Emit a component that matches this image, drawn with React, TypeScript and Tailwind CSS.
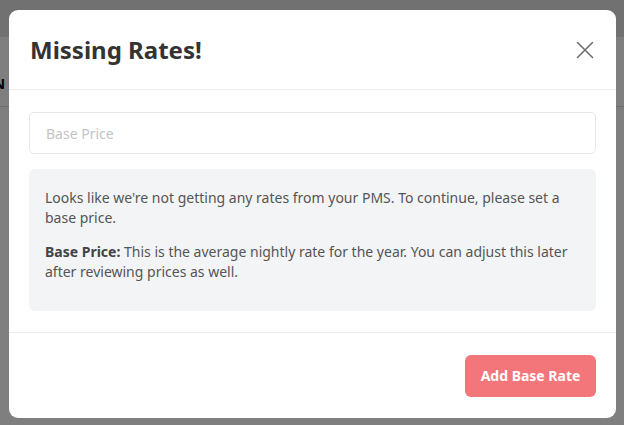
import React from "react";

export default function App() {
  return (
    <div
      className="relative w-[624px] h-[425px] overflow-hidden bg-white"
      style={{ fontFamily: '"Noto Sans", "Open Sans", sans-serif' }}
    >
      {/* background page */}
      <div className="flex flex-col">
        <div className="h-[37px] bg-[#e2e2e2]" />
        <div className="h-[70px] border-b border-[#d8d8d8] flex items-start pt-[38px]">
          <span className="-ml-[7px] text-[15px] leading-[16px] font-bold text-black">N</span>
        </div>
      </div>

      {/* overlay */}
      <div className="absolute inset-0 bg-black/50 pl-[9px] pr-[8px] pt-[10px] pb-[7px]">
        <div className="h-full rounded-[9px] bg-white flex flex-col">
          {/* header */}
          <div className="h-[80px] flex items-center justify-between pl-[21px] pr-[22px] border-b border-[#ececec]">
            <h2 className="text-[24px] font-bold text-[#333333] mt-[1px]">Missing Rates!</h2>
            <svg width="18" height="18" viewBox="0 0 18 18" className="mt-[1px]">
              <path d="M1.5 1.5 L16.5 16.5 M16.5 1.5 L1.5 16.5" stroke="#6f6f6f" strokeWidth="1.6" strokeLinecap="round" />
            </svg>
          </div>

          {/* body */}
          <div className="flex-1 px-[20px] pt-[22px] border-b border-[#ececec]">
            <div className="h-[42px] rounded-[5px] border border-[#e6e6e6] flex items-center pl-[16px]">
              <span className="text-[14px] text-[#c4c4c4]">Base Price</span>
            </div>
            <div className="mt-[15px] rounded-[6px] bg-[#f3f4f6] pl-[16px] pr-[16px] pt-[19px] h-[142px] text-[14px] leading-[20px] text-[#555555]">
              <p>Looks like we're not getting any rates from your PMS. To continue, please set a base price.</p>
              <p className="mt-[14px]">
                <b className="font-bold text-[#444444]">Base Price:</b> This is the average nightly rate for the year. You can adjust this later after reviewing prices as well.
              </p>
            </div>
          </div>

          {/* footer */}
          <div className="h-[85px] flex items-center justify-end pr-[20px]">
            <button className="h-[42px] w-[131px] rounded-[6px] bg-[#f2767a] text-white text-[14px] font-bold">
              Add Base Rate
            </button>
          </div>
        </div>
      </div>
    </div>
  );
}
